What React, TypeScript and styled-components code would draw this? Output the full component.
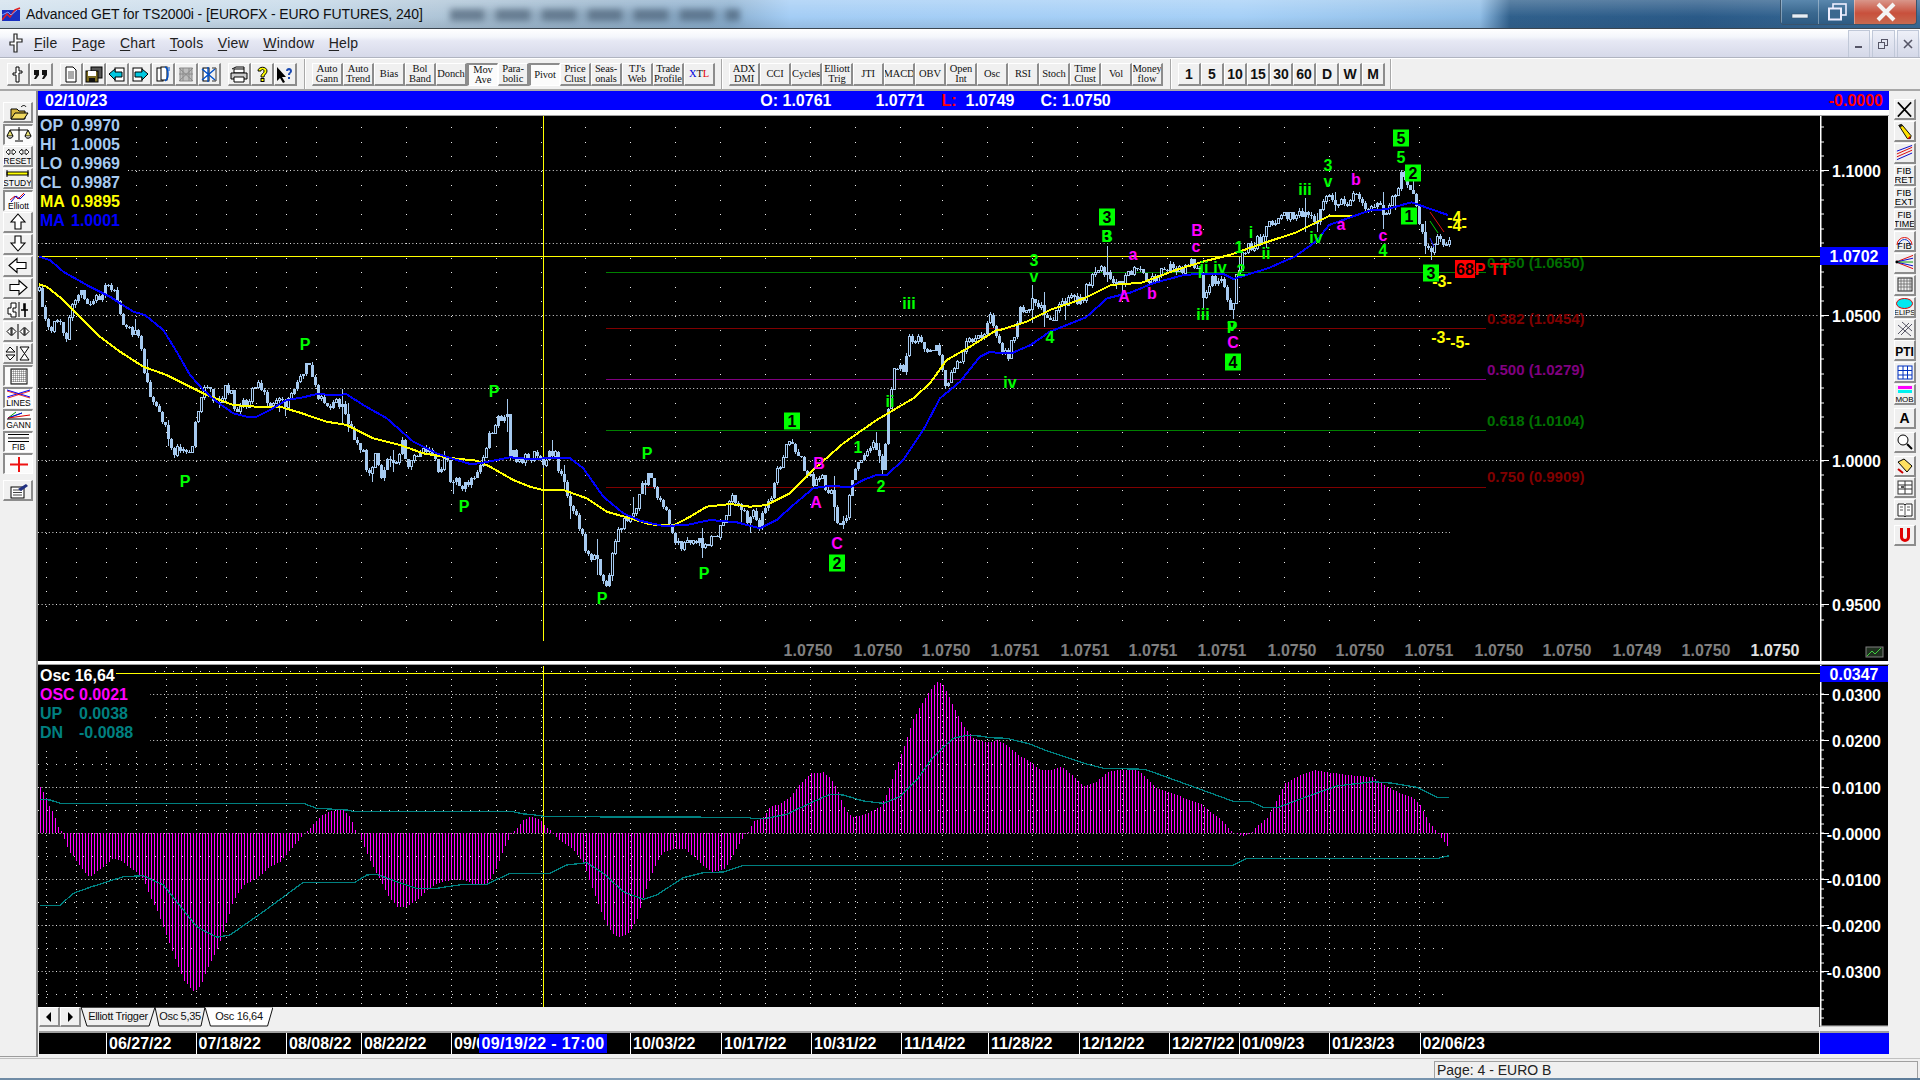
import React from "react";
import styled, { createGlobalStyle } from "styled-components";

const Global = createGlobalStyle`
  html, body { margin: 0; padding: 0; width: 1920px; height: 1080px; overflow: hidden; background: #f0f0f0; }
  #root { width: 1920px; height: 1080px; }
  * { box-sizing: border-box; }
`;

const SANS = `"Liberation Sans", Arial, sans-serif`;
const SKY = "#a6caf0";

/* ---------- data ---------- */
type P = [number, number];
const z9 = (a: number[][]): P[] => a.map(([v, w]) => [30 + v / 3, 240 + w / 3]);
const z10 = (a: number[][]): P[] => a.map(([v, w]) => [530 + v / 3, 280 + w / 3]);
const z7 = (a: number[][]): P[] => a.map(([v, w]) => [1000 + v / 2.613, 110 + w / 3]);
const z8o = (a: number[][]): P[] => a.map(([v, w]) => [30 + v / 3, 640 + w / 3]);
const z11 = (a: number[][]): P[] => a.map(([v, w]) => [530 + v / 3, 660 + w / 3]);
const z12 = (a: number[][]): P[] => a.map(([v, w]) => [1030 + v / 3, 660 + w / 3]);

const pricePath: P[] = [
  ...z9([[27,150],[33,170],[40,250],[60,265],[85,240],[100,280],[110,290],[125,200],[135,190],[155,160],[175,190],[190,165],[205,180],[225,150],[250,140],[265,200],[280,265],[300,270],[320,265],[335,350],[343,410],[352,440],[362,475],[378,485],[390,530],[405,545],[415,590],[425,640],[440,630],[470,640],[485,620],[497,550],[505,525],[515,450],[530,435],[550,470],[570,490],[585,450],[600,450],[615,520],[640,480],[650,520],[665,460],[685,440],[705,465],[720,490],[750,460],[765,505],[790,460],[810,415],[830,350],[845,400],[865,470],[885,510],[905,490],[930,495],[950,530],[970,580],[990,620],[1005,665],[1020,710],[1035,650],[1055,705],[1075,655],[1095,670],[1115,610],[1130,680],[1150,640],[1180,640],[1200,625],[1225,690],[1250,640],[1260,735],[1280,715],[1300,745],[1330,720],[1350,670],[1375,590],[1395,545],[1410,530],[1430,520],[1440,635],[1460,660]]),
  ...z10([[20,530],[40,555],[60,505],[75,530],[90,590],[115,650],[135,700],[155,770],[175,825],[200,850],[225,915],[240,860],[260,760],[285,720],[320,690],[335,620],[355,580],[380,640],[400,680],[420,730],[440,790],[470,795],[500,790],[525,790],[550,770],[585,725],[605,650],[625,675],[650,715],[670,680],[690,740],[705,670],[725,640],[745,560],[765,510],[790,490],[805,520],[825,565],[850,620],[875,590],[885,640],[905,625],[925,745],[950,720],[960,620],[980,560],[1010,520],[1030,480],[1045,510],[1060,580],[1070,400],[1085,300],[1100,255],[1120,285],[1135,165],[1145,195],[1165,160],[1190,230],[1220,205],[1245,310],[1270,285],[1300,210],[1320,170],[1350,180],[1378,115],[1410,210]]),
  ...z7([[20,740],[35,680],[50,590],[70,610],[90,570],[110,605],[130,625],[150,600],[180,560],[210,575],[240,500],[260,480],[280,490],[300,510],[320,515],[350,480],[375,500],[400,510],[440,470],[470,485],[505,460],[520,470],[530,570],[555,510],[585,520],[605,610],[615,515],[630,440],[650,410],[680,390],[710,330],[750,320],[775,310],[800,320],[825,340],[840,300],[860,250],[880,285],[910,280],[930,250],[945,295],[965,290],[985,270],[1005,320],[1030,260],[1050,180],[1060,240],[1080,240],[1090,330],[1100,370],[1115,400],[1130,430],[1145,380],[1160,395],[1175,395]]),
];

const blueMA: P[] = [
  ...z9([[27,50],[60,60],[100,95],[170,135],[240,170],[270,190],[310,215],[345,225],[400,270],[440,335],[480,405],[520,450],[560,485],[610,520],[650,530],[680,530],[720,510],[770,480],[820,472],[860,462],[910,465],[950,463],[1000,495],[1070,535],[1150,605],[1220,640],[1280,660],[1320,672],[1350,670],[1400,660],[1440,652]]),
  ...z10([[0,537],[50,535],[120,535],[160,565],[220,650],[280,700],[330,722],[400,738],[470,735],[540,720],[620,727],[690,745],[740,720],[790,675],[850,625],[900,617],[960,622],[1000,600],[1040,585],[1070,585],[1120,540],[1180,450],[1230,355],[1290,305],[1350,230],[1380,215]]),
  ...z7([[0,730],[30,730],[80,705],[130,665],[225,622],[280,565],[340,548],[400,520],[480,495],[520,492],[585,493],[610,507],[700,475],[770,440],[825,395],[860,345],[920,320],[970,300],[1010,298],[1075,277],[1170,315]]),
];

const yellowMA: P[] = [
  ...z9([[27,133],[50,140],[100,180],[160,240],[210,290],[270,335],[340,380],[410,405],[470,435],[530,465],[610,495],[680,500],[750,500],[810,518],[890,545],[950,555],[1030,595],[1110,615],[1180,640],[1270,655],[1340,662],[1380,680],[1450,720]]),
  ...z10([[0,620],[40,630],[100,630],[170,655],[230,695],[300,715],[360,733],[430,737],[480,710],[530,680],[600,672],[660,680],[710,675],[780,640],[860,560],[940,490],[1040,420],[1150,355],[1200,310],[1250,240],[1320,200],[1400,150]]),
  ...z7([[0,660],[70,635],[130,600],[220,565],[290,525],[370,518],[460,480],[530,455],[600,435],[700,395],[775,367],[860,318],[920,318]]),
];

const histEnv: P[] = [
  ...z8o([[29,440],[38,455],[47,470],[56,495],[65,510],[74,530],[83,560],[92,572],[100,580],[101,595],[110,620],[120,640],[130,650],[140,665],[150,680],[165,700],[180,712],[200,695],[225,675],[250,655],[270,660],[300,685],[320,697],[340,720],[360,770],[380,810],[400,865],[420,915],[440,970],[460,1020],[490,1055],[510,1040],[530,990],[560,930],[585,860],[610,780],[640,735],[680,715],[720,680],[750,665],[780,630],[810,595],[820,580],[830,575],[850,550],[875,525],[905,512],[940,510],[960,530],[975,570],[985,580],[1000,615],[1025,675],[1050,720],[1075,770],[1100,800],[1125,803],[1160,780],[1190,750],[1220,730],[1260,720],[1300,720],[1330,733],[1370,730],[1395,695],[1420,630],[1440,585],[1455,570],[1480,540]]),
  ...z11([[0,470],[30,478],[40,495],[50,502],[60,510],[68,520],[75,530],[100,548],[130,570],[160,610],[175,655],[200,720],[220,775],[245,820],[265,832],[295,820],[320,780],[340,710],[360,655],[380,605],[400,575],[430,568],[465,568],[490,590],[520,620],[545,635],[580,630],[600,600],[625,555],[645,522],[655,515],[670,485],[700,470],[720,440],[750,432],[780,410],[805,378],[840,340],[880,337],[900,355],[920,385],[945,450],[965,470],[990,468],[1020,455],[1050,440],[1075,390],[1095,330],[1120,265],[1150,175],[1190,105],[1220,65],[1240,75],[1270,140],[1300,200],[1330,235],[1370,248],[1400,240],[1430,255],[1465,285]]),
  ...z12([[7,310],[25,328],[50,332],[95,320],[125,345],[160,378],[195,368],[235,335],[270,330],[320,330],[345,350],[380,385],[420,398],[465,415],[510,430],[540,455],[570,475],[600,510],[615,520],[640,528],[660,522],[680,498],[710,475],[735,430],[765,370],[810,345],[850,330],[900,338],[960,346],[1030,352],[1060,375],[1100,395],[1150,415],[1170,435],[1195,485],[1215,510],[1230,530],[1250,555],[1258,580]]),
];

const upperTeal: P[] = [
  ...z8o([[29,478],[60,480],[90,490],[820,490],[860,505],[950,510],[975,515],[1450,515],[1480,522]]),
  ...z11([[0,463],[50,470],[655,472],[665,475],[710,475],[770,463],[850,425],[900,403],[940,405],[1000,423],[1060,430],[1110,410],[1160,360],[1210,290],[1270,235],[1310,226],[1350,228],[1380,233],[1430,235]]),
  ...z12([[0,252],[50,272],[170,312],[220,325],[345,328],[610,424],[660,424],[700,442],[745,442],[830,410],[920,378],[1030,365],[1090,370],[1160,382],[1220,412],[1258,412]]),
];
const lowerTeal: P[] = [
  ...z8o([[29,796],[90,796],[130,760],[180,742],[280,710],[340,707],[400,735],[500,860],[560,892],[600,885],[700,815],[820,727],[975,727],[1010,705],[1040,703],[1100,725],[1160,745],[1220,745],[1300,733],[1370,733],[1440,700]]),
  ...z11([[0,640],[60,640],[110,615],[170,608],[220,640],[280,695],[340,718],[380,705],[460,653],[520,638],[580,636],[640,616]]),
  ...z12([[0,616],[610,616],[650,595],[1225,595],[1258,587]]),
];

const interp = (path: P[], x: number) => {
  for (let i = 1; i < path.length; i++) {
    if (x <= path[i][0]) {
      const [x0, y0] = path[i - 1];
      const [x1, y1] = path[i];
      const t = x1 === x0 ? 0 : (x - x0) / (x1 - x0);
      return y0 + (y1 - y0) * Math.max(0, Math.min(1, t));
    }
  }
  return path[path.length - 1][1];
};
const pts = (p: P[]) => p.map(([x, y]) => `${x.toFixed(1)},${y.toFixed(1)}`).join(" ");

let seed = 20230210;
const rnd = () => {
  seed = (seed + 0x6d2b79f5) | 0;
  let t = Math.imul(seed ^ (seed >>> 15), 1 | seed);
  t = (t + Math.imul(t ^ (t >>> 7), 61 | t)) ^ t;
  return ((t ^ (t >>> 14)) >>> 0) / 4294967296;
};

type Bar = { x: number; o: number; c: number; h: number; l: number; solid: boolean };
const bars: Bar[] = [];
let prev = interp(pricePath, 39);
for (let x = 39; x <= 1451; x += 3) {
  const c = interp(pricePath, x) + (rnd() - 0.5) * 11;
  const spike = rnd() > 0.85 ? rnd() * 15 : 0;
  const h = Math.min(prev, c) - rnd() * 3 - (rnd() > 0.5 ? spike : 0);
  const l = Math.max(prev, c) + rnd() * 3 + (rnd() > 0.5 ? spike : 0);
  bars.push({ x, o: prev, c, h, l, solid: c > prev || rnd() > 0.7 });
  prev = c;
}

const columns = [
  45.7, 75.7, 105.7, 135.7, 165.7, 195.7, 225.7, 255.7, 285.7, 315.7, 360.7, 405.7, 450.7, 495.7, 540.7, 585, 630, 675, 720, 765, 810, 855, 900, 942, 987,
  1032, 1077, 1122, 1167, 1203, 1239, 1284, 1329, 1374, 1419,
];
const mainDense = [170, 243, 315, 388, 460, 532, 604];
const mainRows = Array.from({ length: 35 }, (_, i) => 127 + i * 14.5);
const oscDense = [694, 740, 787, 833, 879, 925, 971];
const oscSparse = [671, 717, 764, 810, 856, 902, 948, 994];

type L = [string, number, number];
const GREEN = "#00ff00";
const MAGENTA = "#ff00ff";
const YELLOW = "#ffff00";
const greenLabels: L[] = [
  ["P", 305, 344], ["P", 185, 481], ["P", 464, 506], ["P", 494, 391], ["P", 647, 453], ["P", 602, 598], ["P", 704, 573],
  ["1", 858, 447], ["2", 881, 486], ["ii", 890, 401], ["iii", 909, 303], ["iv", 1010, 382], ["4", 1050, 337], ["3", 1034, 260], ["v", 1034, 276],
  ["3", 1107, 236], ["B", 1107, 236], ["ii", 1204, 267], ["i", 1200, 272], ["iv", 1220, 267], ["iii", 1203, 314], ["P", 1232, 327], ["v", 1232, 325],
  ["1", 1239, 247], ["2", 1241, 270], ["i", 1251, 232], ["ii", 1266, 253], ["iii", 1305, 189], ["iv", 1316, 237], ["3", 1328, 165], ["v", 1328, 181],
  ["4", 1383, 250], ["5", 1401, 157],
];
const magentaLabels: L[] = [
  ["B", 819, 463], ["A", 816, 502], ["C", 837, 543], ["a", 1133, 254], ["A", 1124, 296], ["b", 1152, 293], ["B", 1197, 230], ["c", 1196, 246],
  ["C", 1233, 342], ["a", 1341, 224], ["b", 1356, 179], ["c", 1383, 235],
];
const boxes: L[] = [["1", 792, 421], ["2", 837, 563], ["3", 1107, 217], ["4", 1233, 362], ["5", 1401, 138], ["2", 1413, 173], ["1", 1409, 216], ["3", 1431, 273]];
const yellowLabels: L[] = [["-4-", 1457, 217], ["-4-", 1457, 225], ["-3-", 1442, 281], ["-3-", 1441, 337], ["-5-", 1460, 342]];
const fibs = [
  { y: 272, ty: 262, t: "0.250 (1.0650)", c: "#006e00" },
  { y: 328, ty: 318, t: "0.382 (1.0454)", c: "#800000" },
  { y: 379, ty: 369, t: "0.500 (1.0279)", c: "#800080" },
  { y: 430, ty: 420, t: "0.618 (1.0104)", c: "#007000" },
  { y: 487, ty: 476, t: "0.750 (0.9909)", c: "#800000" },
];
const priceRow: [string, number, string][] = [
  ["1.0750", 808, "#808080"], ["1.0750", 878, "#808080"], ["1.0750", 946, "#808080"], ["1.0751", 1015, "#808080"], ["1.0751", 1085, "#808080"],
  ["1.0751", 1153, "#808080"], ["1.0751", 1222, "#808080"], ["1.0750", 1292, "#808080"], ["1.0750", 1360, "#808080"], ["1.0751", 1429, "#808080"],
  ["1.0750", 1499, "#808080"], ["1.0750", 1567, "#808080"], ["1.0749", 1637, "#808080"], ["1.0750", 1706, "#808080"], ["1.0750", 1775, "#e0e0e0"],
];

/* ---------- chrome ---------- */
const Page = styled.div`
  width: 1920px; height: 1080px; display: flex; flex-direction: column; background: #f0f0f0; font-family: ${SANS};
`;
const TitleBar = styled.div`
  height: 29px; flex: none; display: flex; align-items: center; position: relative; padding-left: 2px; border-bottom: 1px solid #3c4650;
  background:
    linear-gradient(180deg, rgba(255,255,255,.22) 0%, rgba(255,255,255,0) 60%, rgba(40,60,80,.12) 100%),
    linear-gradient(90deg, #d3e2ee 0, #c4d8e8 300px, #b0c6d8 430px, #98b4cc 600px, #8cb0d0 730px, #a4cdf5 790px, #a6d0f7 1240px, #8fbde6 1480px, #30608c 1510px, #2a5a88 1700px, #3a6c98 1920px);
`;
const TitleBlur = styled.div`
  position: absolute; left: 450px; top: 9px; width: 290px; height: 12px; filter: blur(3px);
  background: repeating-linear-gradient(90deg, rgba(60,80,100,.6) 0 34px, rgba(60,80,100,.15) 34px 46px);
`;
const TitleText = styled.span`
  font-size: 14px; letter-spacing: -0.12px; color: #101010; margin-left: 4px; white-space: nowrap; position: relative;
`;
const WinButtons = styled.div`
  position: absolute; right: 3px; top: 0; height: 25px; display: flex; border: 1px solid #39536b; border-top: 0; border-radius: 0 0 4px 4px; overflow: hidden;
`;
const WinButton = styled.div<{ $w: number; $red?: boolean }>`
  width: ${(p) => p.$w}px; display: flex; align-items: center; justify-content: center; border-left: 1px solid rgba(255,255,255,.35);
  background: ${(p) => (p.$red ? "linear-gradient(180deg,#d9968a,#c8503c 55%,#c86a50)" : "linear-gradient(180deg,#5a87ad,#3a688f 55%,#2e5b83)")};
`;
const MenuBar = styled.div`
  height: 29px; flex: none; display: flex; align-items: center; position: relative; padding-left: 9px; border-bottom: 1px solid #b0b4c0;
  background: linear-gradient(180deg, #ffffff 0, #f4f6fb 8px, #e6e8f4 12px, #d6d9e9 100%);
`;
const MenuItems = styled.nav`
  display: flex; gap: 14.5px; margin-left: 11px; font-size: 14px; letter-spacing: .2px; color: #222;
  u { text-underline-offset: 2px; }
`;
const MdiButtons = styled.div`
  position: absolute; right: 1px; top: 1px; bottom: 0; display: flex; gap: 2px;
`;
const MdiButton = styled.div`
  width: 22.5px; display: flex; align-items: center; justify-content: center; background: linear-gradient(180deg,#eef0f8,#d4d8e8); border: 1px solid #c0c8d8; border-bottom: 0;
`;
const ToolBar = styled.div`
  height: 33px; flex: none; display: flex; padding-left: 7px; background: #f0f0f0; border-top: 1px solid #fff; border-bottom: 2px solid #a8a8a8;
`;
const ToolGroup = styled.div<{ $ml?: number }>`
  display: flex; margin-left: ${(p) => p.$ml ?? 0}px; padding-top: 4px;
`;
const ToolSep = styled.div<{ $l: number; $r: number }>`
  width: 2px; margin: 0 ${(p) => p.$r}px 0 ${(p) => p.$l}px; background: linear-gradient(90deg, #a8a8a8 50%, #fff 50%);
`;
const raised = `
  background: #f0f0f0; border-top: 1px solid #fff; border-left: 1px solid #fff; border-right: 2px solid #8c8c8c; border-bottom: 2px solid #8c8c8c;
`;
const sunken = `
  background: #fbfbfb; border-top: 2px solid #8c8c8c; border-left: 2px solid #8c8c8c; border-right: 1px solid #fff; border-bottom: 1px solid #fff;
`;
const TopButton = styled.div<{ $w: number; $on?: boolean }>`
  width: ${(p) => p.$w}px; height: 23px; display: flex; align-items: center; justify-content: center; text-align: center; overflow: hidden;
  ${(p) => (p.$on ? sunken : raised)}
`;
const ToolLabel = styled.span<{ $color?: string }>`
  font: 10.5px/10px "Liberation Serif", serif; letter-spacing: -0.1px; color: ${(p) => p.$color ?? "#111"}; white-space: pre-line;
`;
const NumLabel = styled.span`
  font: bold 14px ${SANS}; color: #111;
`;
const Body = styled.div`
  flex: 1; display: flex; min-height: 0;
`;
const SideTools = styled.div<{ $w: number; $pt: number; $pl: number }>`
  width: ${(p) => p.$w}px; flex: none; display: flex; flex-direction: column; padding: ${(p) => p.$pt}px 0 0 ${(p) => p.$pl}px;
`;
const LeftTools = styled(SideTools)`
  border-right: 2px solid #8a8a8a; border-bottom: 1px solid #9c9c9c; height: 966px;
`;
const SideButton = styled.div<{ $w: number; $on?: boolean; $mt: number }>`
  width: ${(p) => p.$w}px; height: 21px; margin-top: ${(p) => p.$mt}px; flex: none; display: flex; align-items: center; justify-content: center; overflow: hidden;
  ${(p) => (p.$on ? sunken : raised)}
`;
const Center = styled.div`
  width: 1851px; flex: none; display: flex; flex-direction: column;
`;
const Header = styled.div`
  height: 19px; flex: none; background: #0000ff; display: flex; align-items: center; padding-left: 7px; color: #fff; font: bold 16px ${SANS}; position: relative;
  margin-bottom: 5px; box-shadow: 0 5px 0 #fff;
`;
const HeaderStat = styled.span<{ $ml: number; $c?: string }>`
  margin-left: ${(p) => p.$ml}px; color: ${(p) => p.$c ?? "#fff"}; white-space: pre;
`;
const HeaderEnd = styled.span`
  margin-left: auto; margin-right: 6px; color: #ff0000;
`;
const HeadRule = styled.div`
  height: 1px; flex: none; background: #a0a0a0;
`;
const ChartRow = styled.div<{ $h: number }>`
  height: ${(p) => p.$h}px; flex: none; display: flex;
`;
const ChartColumn = styled.div`
  width: 1782px; flex: none; display: flex; flex-direction: column;
`;
const Canvas = styled.svg`
  display: block; flex: none; background: #000;
`;
const Splitter = styled.div`
  height: 4px; flex: none; background: #fff; border-bottom: 1px solid #a0a0a0;
`;
const Tabs = styled.div`
  height: 20px; flex: none; display: flex; align-items: stretch; background: #f0f0f0; padding-left: 1px; border-right: 1px solid #555;
`;
const NavButton = styled.div`
  width: 21px; height: 20px; display: flex; align-items: center; justify-content: center; ${raised}
`;
const Tab = styled.div<{ $w: number }>`
  width: ${(p) => p.$w}px; height: 20px; position: relative; display: flex; align-items: center; justify-content: center;
  font: 11px ${SANS}; letter-spacing: -0.3px; color: #111; padding-bottom: 3px;
  svg { position: absolute; inset: 0; width: 100%; height: 100%; }
  span { position: relative; }
`;
const DateRow = styled.div`
  display: flex; margin-top: 4px; height: 25px; flex: none;
`;
const DateBar = styled.div`
  width: 1781px; height: 23px; position: relative; display: flex; background: #000; border-top: 2px solid #a0a0a0; margin-left: 1px;
`;
const DateCell = styled.div<{ $w: number }>`
  width: ${(p) => p.$w}px; flex: none; overflow: hidden; white-space: nowrap; padding-left: 2px; border-left: 1px solid #fff;
  color: #fff; font: bold 16px/21px ${SANS};
`;
const DateGap = styled.div<{ $w: number }>`
  width: ${(p) => p.$w}px; flex: none;
`;
const DateMark = styled.div`
  position: absolute; left: 440px; top: 1px; width: 128px; height: 19px; background: #0000ff; color: #fff; font: bold 16px/19px ${SANS}; text-align: center; letter-spacing: .35px;
`;
const BlueBlock = styled.div`
  width: 69px; height: 23px; margin-left: 1px; background: #0000ff; border-top: 2px solid #a0a0a0;
`;
const StatusBar = styled.div`
  height: 20px; flex: none; display: flex; justify-content: flex-end; border-top: 1px solid #c0c0c0;
`;
const PageBox = styled.div`
  width: 484px; margin-right: 2px; margin-top: 2px; border-top: 1px solid #a0a0a0; border-left: 1px solid #a0a0a0; border-right: 1px solid #a0a0a0; padding-left: 2px;
  font: 14px/17px ${SANS}; color: #222;
`;
const BottomEdge = styled.div`
  height: 2px; flex: none; background: linear-gradient(90deg, #6f8ba5, #8faac2 50%, #5d7c99);
`;
const Legend = styled.text<{ $c: string }>`
  fill: ${(p) => p.$c}; font: bold 16px ${SANS}; dominant-baseline: central;
`;
const Mark = styled.text<{ $c: string; $s?: number }>`
  fill: ${(p) => p.$c}; font: bold ${(p) => p.$s ?? 16}px ${SANS}; text-anchor: middle; dominant-baseline: central;
`;
const FibText = styled.text<{ $c: string }>`
  fill: ${(p) => p.$c}; font: bold 15px ${SANS}; dominant-baseline: central;
`;
const AxisText = styled.text`
  fill: #fff; font: bold 16px ${SANS}; text-anchor: end; dominant-baseline: central;
`;
const AxisTag = styled.text`
  fill: #fff; font: bold 16px ${SANS}; text-anchor: middle; dominant-baseline: central;
`;
const IconText = styled.text<{ $s: number; $c?: string }>`
  font: ${(p) => p.$s}px ${SANS}; fill: ${(p) => p.$c ?? "#000"}; text-anchor: middle;
`;

/* ---------- icons ---------- */
const Ico: React.FC<{ w?: number; h?: number; children: React.ReactNode }> = ({ w = 20, h = 17, children }) => (
  <svg width={w} height={h} viewBox={`0 0 ${w} ${h}`}>{children}</svg>
);
const Arrow: React.FC<{ d: string }> = ({ d }) => (
  <Ico w={24} h={17}><path d={d} fill="#fff" stroke="#000" strokeWidth="1.1" /></Ico>
);
const PinPath = "M8 1h3v4h3v2h-3v9H8V9H5V7h3z";

const topIcons: React.ReactNode[] = [
  <Ico key="a"><path d={PinPath} fill="#fff" stroke="#000" /></Ico>,
  <Ico key="b"><path d="M3 4h5v5l-3 4H3l2-4H3zM11 4h5v5l-3 4h-2l2-4h-2z" fill="#111" /></Ico>,
];
const fileIcons: React.ReactNode[] = [
  <Ico key="1"><path d="M5 1h7l3 3v12H5z" fill="#fff" stroke="#000" /><path d="M7 6h6M7 8h6M7 10h6M7 12h6" stroke="#555" /></Ico>,
  <Ico key="2"><rect x="7" y="1" width="11" height="11" fill="#555" stroke="#000" /><rect x="2" y="5" width="12" height="11" fill="#7a6a20" stroke="#000" /><rect x="4" y="5" width="8" height="5" fill="#fff" /><rect x="5" y="12" width="6" height="4" fill="#111" /></Ico>,
  <Ico key="3"><rect x="8" y="2" width="9" height="13" fill="#fff" stroke="#000" /><path d="M2 8l6-5v3h7v5H8v3z" fill="#00c8e0" stroke="#000" /></Ico>,
  <Ico key="4"><rect x="3" y="2" width="9" height="13" fill="#fff" stroke="#000" /><path d="M18 8l-6-5v3H5v5h7v3z" fill="#00c8e0" stroke="#000" /></Ico>,
  <Ico key="5"><rect x="4" y="2" width="6" height="13" fill="#fff" stroke="#000" /><rect x="8" y="1" width="6" height="13" fill="#fff" stroke="#000" /><path d="M12 1c3 1 3 4 3 7s0 5-3 7" fill="none" stroke="#0050c8" strokeWidth="1.5" /><path d="M16 1v4" stroke="#0050c8" /></Ico>,
  <Ico key="6"><rect x="4" y="2" width="12" height="13" fill="#bdbdbd" stroke="#8a8a8a" /><path d="M3 2l14 13M17 2L3 15M7 2v13M13 2v13M3 8h14" stroke="#8a8a8a" /></Ico>,
  <Ico key="7"><rect x="4" y="2" width="6" height="13" fill="#fff" stroke="#000" /><path d="M3 3l13 11M16 3L3 14M9 1v15" stroke="#0050c8" strokeWidth="1.4" /><path d="M13 2h4v13h-4" fill="none" stroke="#333" /></Ico>,
];
const helpIcons: React.ReactNode[] = [
  <Ico key="1"><path d="M5 3h10v4H5z" fill="#fff" stroke="#000" /><path d="M2 7h16v6H2z" fill="#ccc" stroke="#000" /><path d="M5 11h10v5H5z" fill="#fff" stroke="#000" /><path d="M3 3l4-2h8v2" fill="none" stroke="#000" /></Ico>,
  <Ico key="2"><path d="M6 5c0-5 9-5 9 0 0 3-3 3-3 6H9c0-4 3-3 3-6 0-2-3-2-3 0z" fill="#ff0" stroke="#000" /><rect x="9" y="12.5" width="3" height="3" fill="#ff0" stroke="#000" /></Ico>,
  <Ico key="3"><path d="M2 1v14l3-3 3 5 2-1-3-5h4z" fill="#000" /><path d="M11 5c0-4 6-4 6 0 0 2-2 2-2 4h-2c0-3 2-2 2-4 0-1-2-1-2 0zM13 11h2v2h-2z" fill="#1848b0" /></Ico>,
];

const ind1: { t: React.ReactNode; on?: boolean }[] = [
  { t: "Auto\nGann" }, { t: "Auto\nTrend" }, { t: "Bias" }, { t: "Bol\nBand" }, { t: "Donch" }, { t: "Mov\nAve", on: true }, { t: "Para-\nbolic" }, { t: "Pivot", on: true },
  { t: "Price\nClust" }, { t: "Seas-\nonals" }, { t: "TJ's\nWeb" }, { t: "Trade\nProfile" },
];
const ind2 = ["ADX\nDMI", "CCI", "Cycles", "Elliott\nTrig", "JTI", "MACD", "OBV", "Open\nInt", "Osc", "RSI", "Stoch", "Time\nClust", "Vol", "Money\nflow"];
const periods = ["1", "5", "10", "15", "30", "60", "D", "W", "M"];

const leftIcons: { n: React.ReactNode; on?: boolean }[] = [
  { n: <Ico w={24}><path d="M5 5h6l2 2h6v8H5z" fill="#d8b840" stroke="#000" /><path d="M5 15l4-6h13l-4 6z" fill="#f0d860" stroke="#000" /><path d="M15 3c2-2 4-2 5 0" fill="none" stroke="#000" /></Ico> },
  { n: <Ico w={26}><path d="M13 1v13M4 4h18M9 15h8" stroke="#000" /><path d="M4 4L1 10h6zM22 4l-3 6h6z" fill="#e8e070" stroke="#000" /><path d="M1 10c1 3 5 3 6 0M19 10c1 3 5 3 6 0" fill="#bbb" stroke="#000" /></Ico>, on: true },
  { n: <Ico w={27} h={18}><path d="M2 5l3-3v2h4V2l3 3-3 3V6H5v2zM15 5l3-3v2h4V2l3 3-3 3V6h-4v2z" fill="#fff" stroke="#000" strokeWidth=".8" /><IconText x={13.5} y={16.5} $s={8.5}>RESET</IconText></Ico> },
  { n: <Ico w={27} h={18}><rect x="3" y="3" width="21" height="3" fill="#ff0" stroke="#000" /><path d="M3 1v7M24 1v7" stroke="#000" /><IconText x={13.5} y={16.5} $s={8.5}>STUDY</IconText></Ico> },
  { n: <Ico w={27} h={18}><path d="M5 8l5-4 3 3 6-6" fill="none" stroke="#d00" /><path d="M6 10l5-6 4 3 5-5" fill="none" stroke="#00c" /><IconText x={13.5} y={16.5} $s={8.5}>Elliott</IconText></Ico>, on: true },
  { n: <Arrow d="M12 1l7 8h-4v7H9V9H5z" /> },
  { n: <Arrow d="M12 16l7-8h-4V1H9v7H5z" /> },
  { n: <Arrow d="M3 8.5l8-7v4h9v6h-9v4z" /> },
  { n: <Arrow d="M21 8.5l-8-7v4H4v6h9v4z" /> },
  { n: <Ico w={26}><path d="M3 7h3V2h5v5H8v4h3v5H6v-3H3z" fill="#fff" stroke="#000" /><path d="M14 1v15" stroke="#000" /><path d="M16 9h3V3h1v6h3M20 9v7" fill="none" stroke="#000" strokeWidth="1.6" /></Ico> },
  { n: <Ico w={26}><path d="M13 1v15" stroke="#000" /><path d="M2 8.5l4-4v8zM11 8.5l-4-4v8zM15 8.5l4-4v8zM24 8.5l-4-4v8z" fill="#fff" stroke="#000" /></Ico> },
  { n: <Ico w={26}><path d="M12 1v15" stroke="#000" /><path d="M5 2l5 5H1zM5 15l5-5H1z" fill="#fff" stroke="#000" /><path d="M15 2h9l-9 13h9z" fill="#fff" stroke="#000" /></Ico> },
  { n: <Ico w={24}><rect x="4" y="1" width="16" height="15" fill="#fff" stroke="#000" /><path d="M6 1v15M8 1v15M10 1v15M12 1v15M14 1v15M16 1v15M18 1v15M4 3h16M4 5h16M4 7h16M4 9h16M4 11h16M4 13h16" stroke="#333" strokeWidth=".7" strokeDasharray="1 1" /></Ico>, on: true },
  { n: <Ico w={27} h={18}><path d="M2 1l23 7M2 8l23-7" stroke="#00f" /><path d="M2 2l23 7M3 9L25 2" stroke="#d00" strokeWidth=".8" /><IconText x={13.5} y={16.5} $s={8.5}>LINES</IconText></Ico>, on: true },
  { n: <Ico w={27} h={18}><path d="M3 7l8-6M3 7l14-5" stroke="#090" /><path d="M3 7l14-5" stroke="#00f" /><path d="M3 7l22-3" stroke="#d00" /><path d="M2 8h24" stroke="#000" /><IconText x={13.5} y={16.5} $s={8.5}>GANN</IconText></Ico>, on: true },
  { n: <Ico w={27} h={18}><path d="M3 1.5h21M3 5h21M3 8.5h21" stroke="#000" /><IconText x={13.5} y={16.5} $s={8.5}>FIB</IconText></Ico>, on: true },
  { n: <Ico w={24}><path d="M12 1v15M3 8.5h18" stroke="#ee1111" strokeWidth="2" /></Ico>, on: true },
];

const rightIcons: React.ReactNode[] = [
  <Ico key="a" w={20}><path d="M3 1l14 15M17 1L3 16" stroke="#000" strokeWidth="1.7" /></Ico>,
  <Ico key="b" w={20}><path d="M4 2l3-1 10 12-1 3-3 0z" fill="#ffe000" stroke="#000" /><path d="M16 16l-3 0 3-3z" fill="#c00" /><path d="M4 2l3-1 1 2-3 1z" fill="#222" /></Ico>,
  <Ico key="c" w={20}><path d="M2 9l16-7M2 12l16-7" stroke="#d00" /><path d="M2 15l16-7M2 6l16-6" stroke="#00c" /></Ico>,
  <Ico key="d" w={19} h={18}><IconText x={9} y={8} $s={9.5}>FIB</IconText><IconText x={9} y={16.5} $s={9.5}>RET</IconText></Ico>,
  <Ico key="e" w={19} h={18}><IconText x={9} y={8} $s={9.5}>FIB</IconText><IconText x={9} y={16.5} $s={9.5}>EXT</IconText></Ico>,
  <Ico key="f" w={19} h={18}><IconText x={9.5} y={8} $s={9}>FIB</IconText><IconText x={9.5} y={16.5} $s={9}>TIME</IconText></Ico>,
  <Ico key="g" w={19} h={18}><path d="M2 13a7.5 7.5 0 0 1 15 0" fill="none" stroke="#e01010" /><path d="M4 13a5.5 5.5 0 0 1 11 0" fill="none" stroke="#1040d0" /><IconText x={9.5} y={16.5} $s={9.5}>FIB</IconText></Ico>,
  <Ico key="h" w={20}><path d="M1 8l18-7M1 8l18 7" stroke="#d00" /><path d="M1 8l18-4M1 8l18 4" stroke="#00c" /><path d="M1 8h18" stroke="#090" /><circle cx="2" cy="8" r="1.5" /></Ico>,
  <Ico key="i" w={19}><rect x="3" y="2" width="14" height="13" fill="#eee" stroke="#222" /><path d="M6 2v13M9 2v13M12 2v13M15 2v13M3 5h14M3 8h14M3 11h14" stroke="#666" strokeWidth=".8" /></Ico>,
  <Ico key="j" w={19} h={18}><ellipse cx="9.5" cy="5.5" rx="8" ry="5" fill="#00e8f0" stroke="#d00" /><IconText x={9.5} y={16.5} $s={7.5}>ELIPS</IconText></Ico>,
  <Ico key="k" w={19}><path d="M3 14L14 3M6 15L17 4M3 5l13 11M7 2l10 9" stroke="#445" strokeWidth=".9" /></Ico>,
  <Ico key="l" w={19}><text x="9.5" y="13.5" textAnchor="middle" fontFamily={SANS} fontWeight="bold" fontSize="12">PTI</text></Ico>,
  <Ico key="m" w={19}><rect x="3" y="2" width="14" height="13" fill="#fff" stroke="#0030c0" /><path d="M8 2v13M12.5 2v13M3 6.5h14M3 11h14" stroke="#0030c0" /></Ico>,
  <Ico key="n" w={19} h={18}><rect x="3" y="1" width="14" height="3" fill="#ff00ff" /><rect x="3" y="5" width="14" height="3" fill="#00f0f0" /><IconText x={9.5} y={16.5} $s={8}>MOB</IconText></Ico>,
  <Ico key="o" w={19}><text x="9.5" y="14" textAnchor="middle" fontFamily={SANS} fontWeight="bold" fontSize="14">A</text></Ico>,
  <Ico key="p" w={19}><circle cx="8" cy="7" r="5" fill="#fff" stroke="#000" /><path d="M12 11l5 5" stroke="#000" strokeWidth="2" /></Ico>,
  <Ico key="q" w={19}><path d="M3 5l6-3 8 7-5 6z" fill="#ffe060" stroke="#000" /><path d="M3 12l5 4" stroke="#c00" strokeWidth="2" /></Ico>,
  <Ico key="r" w={19}><rect x="3" y="2" width="14" height="13" fill="#fff" stroke="#333" /><path d="M3 6h14M3 10h14M10 2v13" stroke="#333" /><rect x="6" y="7" width="3" height="2" fill="#555" /></Ico>,
  <Ico key="s" w={19}><path d="M3 3h6l1 1 1-1h6v12h-6l-1 1-1-1H3z" fill="#fff" stroke="#222" /><path d="M5 6h3M5 9h3M12 6h3M12 9h3M10 4v11" stroke="#555" /></Ico>,
];
const rightTops = [8, 1, 1, 1, 1, 0.5, 1, 1, 1, 1, 1, 0.5, 1, 1, 2.5, 3, 3, 0.5, 1];

const dateCells: [string, number][] = [
  ["06/27/22", 89.5], ["07/18/22", 90.5], ["08/08/22", 75], ["08/22/22", 90], ["09/05/22", 179], ["10/03/22", 91], ["10/17/22", 90], ["10/31/22", 90], ["11/14/22", 87],
  ["11/28/22", 91], ["12/12/22", 90], ["12/27/22", 70], ["01/09/23", 90], ["01/23/23", 90.5], ["02/06/23", 397],
];

/* ---------- charts ---------- */
const Fmt: React.FC<{ lines: [string, string, string][] }> = ({ lines }) => (
  <>
    {lines.map(([a, b, c], i) => (
      <g key={i}>
        <Legend $c={c} x={40} y={125 + i * 19}>{a}</Legend>
        <Legend $c={c} x={71} y={125 + i * 19}>{b}</Legend>
      </g>
    ))}
  </>
);

const PriceChart = () => (
  <Canvas width={1782} height={545} viewBox="38 116 1782 545">
    <g fill="#e8e8e8">
      {columns.map((x) => mainRows.map((y) => <rect key={`${x}-${y}`} x={Math.round(x)} y={Math.round(y)} width={1} height={1} />))}
    </g>
    {mainDense.map((y) => (
      <line key={y} x1={38} x2={y === 388 || y === 532 || y === 243 ? 1450 : 1820} y1={y + 0.5} y2={y + 0.5} stroke="#e0e0e0" strokeDasharray="1 2.6" />
    ))}
    {fibs.map((f) => (
      <line key={f.y} x1={606} x2={1486} y1={f.y + 0.5} y2={f.y + 0.5} stroke={f.c === "#006e00" || f.c === "#007000" ? "#008000" : f.c} />
    ))}
    <rect x={38} y={116} width={88} height={114} fill="#000" />
    <line x1={38} x2={1820} y1={256.5} y2={256.5} stroke={YELLOW} />
    <line x1={543.5} x2={543.5} y1={116} y2={641} stroke={YELLOW} />
    <g shapeRendering="crispEdges">
      {bars.map((b) => {
        const top = Math.min(b.o, b.c);
        const hh = Math.max(1, Math.abs(b.o - b.c));
        return (
          <g key={b.x}>
            <line x1={b.x + 0.5} x2={b.x + 0.5} y1={b.h} y2={b.l} stroke={SKY} />
            {b.solid ? (
              <rect x={b.x - 1} y={top} width={3} height={hh} fill={SKY} />
            ) : (
              <rect x={b.x - 0.5} y={top} width={2} height={hh} fill="#000" stroke={SKY} strokeWidth={1} />
            )}
          </g>
        );
      })}
      <line x1={1107.5} x2={1107.5} y1={246} y2={282} stroke={SKY} />
      <line x1={1305.5} x2={1305.5} y1={198} y2={232} stroke={SKY} />
      <line x1={1431.5} x2={1431.5} y1={250} y2={260} stroke={SKY} />
    </g>
    <polyline points={pts(yellowMA)} fill="none" stroke={YELLOW} strokeWidth="2" shapeRendering="crispEdges" />
    <polyline points={pts(blueMA)} fill="none" stroke="#0000ff" strokeWidth="2" shapeRendering="crispEdges" />
    <path d="M1430 212l14 20" stroke="#e01010" />
    <path d="M1430 221l8 12" stroke="#00d000" />
    <path d="M1430 238l4 9" stroke="#2020ff" />
    {fibs.map((f) => <FibText key={f.t} $c={f.c} x={1487} y={f.ty}>{f.t}</FibText>)}
    {priceRow.map(([t, x, c]) => <Mark key={x} $c={c} x={x} y={650}>{t}</Mark>)}
    {greenLabels.map(([t, x, y], i) => <Mark key={i} $c={GREEN} x={x} y={y}>{t}</Mark>)}
    {magentaLabels.map(([t, x, y], i) => <Mark key={i} $c={MAGENTA} x={x} y={y}>{t}</Mark>)}
    {boxes.map(([t, x, y], i) => (
      <g key={i}>
        <rect x={x - 8} y={y - 8.5} width={16} height={17} fill={GREEN} />
        <Mark $c="#000" x={x} y={y}>{t}</Mark>
      </g>
    ))}
    {yellowLabels.map(([t, x, y], i) => <Mark key={i} $c={YELLOW} x={x} y={y}>{t}</Mark>)}
    <rect x={1455} y={260} width={20} height={18} fill="#ff0000" />
    <Mark $c="#000" x={1465} y={269}>68</Mark>
    <Mark $c="#ff0000" x={1492} y={269}>P TT</Mark>
    <Fmt lines={[
      ["OP", "0.9970", SKY], ["HI", "1.0005", SKY], ["LO", "0.9969", SKY], ["CL", "0.9987", SKY], ["MA", "0.9895", YELLOW], ["MA", "1.0001", "#0000ff"],
    ]} />
  </Canvas>
);

const PriceAxis = () => (
  <Canvas width={69} height={545} viewBox="1820 116 69 545">
    <line x1={1820.5} x2={1820.5} y1={116} y2={661} stroke="#fff" strokeWidth="2" />
    {mainRows.map((y) => <line key={y} x1={1820} x2={1824} y1={Math.round(y)} y2={Math.round(y)} stroke="#fff" strokeWidth={1} />)}
    {[170, 315, 460, 604].map((y) => <line key={y} x1={1820} x2={1829} y1={y + 0.5} y2={y + 0.5} stroke="#fff" />)}
    <AxisText x={1881} y={171}>1.1000</AxisText>
    <AxisText x={1881} y={316}>1.0500</AxisText>
    <AxisText x={1881} y={461}>1.0000</AxisText>
    <AxisText x={1881} y={605}>0.9500</AxisText>
    <rect x={1820} y={247} width={68} height={18} fill="#0000ff" />
    <AxisTag x={1854} y={256}>1.0702</AxisTag>
    <rect x={1866} y={647} width={17} height={10} fill="#203020" stroke="#808080" />
    <path d="M1867 656l5-5 3 3 6-6" stroke="#40d040" fill="none" />
    <rect x={1888} y={116} width={1} height={545} fill="#f0f0f0" />
  </Canvas>
);

const histX: number[] = [];
for (let x = 40; x <= 1449; x += 3) histX.push(x);

const OscChart = () => (
  <Canvas width={1782} height={342} viewBox="38 665 1782 342">
    {columns.map((x) => <line key={x} x1={Math.round(x) + 0.5} x2={Math.round(x) + 0.5} y1={667} y2={1007} stroke="#e0e0e0" strokeDasharray="1 5" />)}
    {oscSparse.map((y) => <line key={y} x1={38} x2={1451} y1={y + 0.5} y2={y + 0.5} stroke="#e0e0e0" strokeDasharray="1 8" />)}
    {oscDense.map((y) => <line key={y} x1={38} x2={1820} y1={y + 0.5} y2={y + 0.5} stroke="#e0e0e0" strokeDasharray="1 2.6" />)}
    <rect x={38} y={665} width={112} height={82} fill="#000" />
    <line x1={116} x2={1820} y1={673.5} y2={673.5} stroke={YELLOW} />
    <line x1={543.5} x2={543.5} y1={666} y2={1007} stroke={YELLOW} />
    <g shapeRendering="crispEdges">
      {histX.map((x) => {
        const y = interp(histEnv, x);
        return <line key={x} x1={x + 0.5} x2={x + 0.5} y1={833} y2={y} stroke={MAGENTA} />;
      })}
    </g>
    <polyline points={pts(upperTeal)} fill="none" stroke="#008080" strokeWidth="1.3" shapeRendering="crispEdges" />
    <polyline points={pts(lowerTeal)} fill="none" stroke="#008080" strokeWidth="1.3" shapeRendering="crispEdges" />
    <Legend $c="#fff" x={40} y={675}>Osc 16,64</Legend>
    <Legend $c={MAGENTA} x={40} y={694}>OSC</Legend>
    <Legend $c={MAGENTA} x={79} y={694}>0.0021</Legend>
    <Legend $c="#008080" x={40} y={713}>UP</Legend>
    <Legend $c="#008080" x={79} y={713}>0.0038</Legend>
    <Legend $c="#008080" x={40} y={732}>DN</Legend>
    <Legend $c="#008080" x={79} y={732}>-0.0088</Legend>
  </Canvas>
);

const oscTicks = Array.from({ length: 36 }, (_, i) => 694 + i * 9.27);
const OscAxis = () => (
  <Canvas width={69} height={362} viewBox="1820 665 69 362">
    <line x1={1820.5} x2={1820.5} y1={665} y2={1027} stroke="#fff" strokeWidth="2" />
    {oscTicks.map((y) => <line key={y} x1={1820} x2={1824} y1={Math.round(y)} y2={Math.round(y)} stroke="#fff" />)}
    {oscDense.map((y) => <line key={y} x1={1820} x2={1829} y1={y + 0.5} y2={y + 0.5} stroke="#fff" />)}
    {["0.0300", "0.0200", "0.0100", "-0.0000", "-0.0100", "-0.0200", "-0.0300"].map((t, i) => (
      <AxisText key={t} x={1881} y={oscDense[i] + 1}>{t}</AxisText>
    ))}
    <rect x={1820} y={666} width={68} height={16} fill="#0000ff" />
    <AxisTag x={1854} y={674}>0.0347</AxisTag>
    <rect x={1888} y={665} width={1} height={362} fill="#f0f0f0" />
    <rect x={1820} y={1025.5} width={68} height={1.5} fill="#c8c8c8" />
  </Canvas>
);

const TabShape: React.FC<{ on?: boolean }> = ({ on }) => (
  <svg viewBox="0 0 100 20" preserveAspectRatio="none">
    <polygon points="0,0 8,19 92,19 100,0" fill={on ? "#fff" : "#f0f0f0"} stroke="#111" strokeWidth="1" vectorEffect="non-scaling-stroke" />
    <line x1="0" y1="0" x2="100" y2="0" stroke={on ? "#fff" : "#111"} strokeWidth="1" vectorEffect="non-scaling-stroke" />
  </svg>
);

export default function App() {
  return (
    <Page>
      <Global />
      <TitleBar>
        <TitleBlur />
        <svg width="20" height="18" viewBox="0 0 20 18">
          <rect x="0" y="5" width="18" height="11" fill="#1830c0" />
          <path d="M0 15l5-6 3 3 5-7 5-2" fill="none" stroke="#e02020" strokeWidth="1.6" />
          <path d="M0 10l6-3 3 3 6-5" fill="none" stroke="#80a0ff" />
        </svg>
        <TitleText>Advanced GET for TS2000i - [EUROFX - EURO FUTURES, 240]</TitleText>
        <WinButtons>
          <WinButton $w={37}>
            <svg width="18" height="14" viewBox="0 0 18 14"><rect x="1" y="9" width="16" height="4" fill="#e8eef4" stroke="#33506c" strokeWidth=".6" /></svg>
          </WinButton>
          <WinButton $w={36}>
            <svg width="20" height="18" viewBox="0 0 20 18"><rect x="6" y="1" width="13" height="11" fill="none" stroke="#eef" strokeWidth="1.6" /><rect x="2" y="5.5" width="12" height="11" fill="#3a688f" stroke="#eef" strokeWidth="2" /></svg>
          </WinButton>
          <WinButton $w={62} $red>
            <svg width="22" height="20" viewBox="0 0 22 20"><path d="M3 2l16 16M19 2L3 18" stroke="#f4f4f4" strokeWidth="4" /></svg>
          </WinButton>
        </WinButtons>
      </TitleBar>

      <MenuBar>
        <svg width="14" height="20" viewBox="0 0 14 20"><path d="M5 1h3v5h5v3H8v10H5v-7H1V9h4z" fill="#fff" stroke="#222" strokeWidth="1.2" /></svg>
        <MenuItems>
          <span><u>F</u>ile</span>
          <span><u>P</u>age</span>
          <span><u>C</u>hart</span>
          <span><u>T</u>ools</span>
          <span><u>V</u>iew</span>
          <span><u>W</u>indow</span>
          <span><u>H</u>elp</span>
        </MenuItems>
        <MdiButtons>
          <MdiButton><svg width="10" height="10" viewBox="0 0 10 10"><path d="M1 8h7" stroke="#556" strokeWidth="2" /></svg></MdiButton>
          <MdiButton><svg width="10" height="10" viewBox="0 0 10 10"><rect x="3.5" y=".5" width="6" height="6" fill="none" stroke="#556" /><rect x=".5" y="3.5" width="6" height="6" fill="#e0e4f0" stroke="#556" /></svg></MdiButton>
          <MdiButton><svg width="10" height="10" viewBox="0 0 10 10"><path d="M1 1l8 8M9 1L1 9" stroke="#556" strokeWidth="1.6" /></svg></MdiButton>
        </MdiButtons>
      </MenuBar>

      <ToolBar>
        <ToolGroup>{topIcons.map((n, i) => <TopButton key={i} $w={23}>{n}</TopButton>)}</ToolGroup>
        <ToolGroup $ml={7}>{fileIcons.map((n, i) => <TopButton key={i} $w={23}>{n}</TopButton>)}</ToolGroup>
        <ToolGroup $ml={7}>{helpIcons.map((n, i) => <TopButton key={i} $w={23}>{n}</TopButton>)}</ToolGroup>
        <ToolSep $l={7} $r={6} />
        <ToolGroup>
          {ind1.map((b, i) => <TopButton key={i} $w={31} $on={b.on}><ToolLabel>{b.t}</ToolLabel></TopButton>)}
          <TopButton $w={31}>
            <ToolLabel $color="#0000e0">X</ToolLabel><ToolLabel>T</ToolLabel><ToolLabel $color="#e00000">L</ToolLabel>
          </TopButton>
        </ToolGroup>
        <ToolSep $l={6} $r={6} />
        <ToolGroup>{ind2.map((t) => <TopButton key={t} $w={31}><ToolLabel>{t}</ToolLabel></TopButton>)}</ToolGroup>
        <ToolSep $l={7} $r={6} />
        <ToolGroup>{periods.map((t) => <TopButton key={t} $w={23}><NumLabel>{t}</NumLabel></TopButton>)}</ToolGroup>
        <ToolSep $l={5} $r={0} />
      </ToolBar>

      <Body>
        <LeftTools $w={38} $pt={11} $pl={3}>
          {leftIcons.map((b, i) => <SideButton key={i} $w={30} $on={b.on} $mt={i === 0 ? 0 : 0.95}>{b.n}</SideButton>)}
          <SideButton $w={30} $mt={6}>
            <Ico w={24}><rect x="5" y="5" width="13" height="11" fill="#fff" stroke="#000" /><path d="M7 8h9M7 10.5h9M7 13h9" stroke="#444" /><path d="M12 7l8-5 2 2-7 5z" fill="#203080" /></Ico>
          </SideButton>
        </LeftTools>

        <Center>
          <Header>
            <span>02/10/23</span>
            <HeaderStat $ml={653}>O: 1.0761</HeaderStat>
            <HeaderStat $ml={44}>1.0771</HeaderStat>
            <HeaderStat $ml={17} $c="#ff0000">L:</HeaderStat>
            <HeaderStat $ml={9}>1.0749</HeaderStat>
            <HeaderStat $ml={26}>C: 1.0750</HeaderStat>
            <HeaderEnd>-0.0000</HeaderEnd>
          </Header>
          <HeadRule />
          <ChartRow $h={545}>
            <PriceChart />
            <PriceAxis />
          </ChartRow>
          <Splitter />
          <ChartRow $h={362}>
            <ChartColumn>
              <OscChart />
              <Tabs>
                <NavButton><svg width="8" height="10" viewBox="0 0 8 10"><path d="M6 0v10L1 5z" /></svg></NavButton>
                <NavButton><svg width="8" height="10" viewBox="0 0 8 10"><path d="M2 0v10l5-5z" /></svg></NavButton>
                <Tab $w={74}><TabShape /><span>Elliott Trigger</span></Tab>
                <Tab $w={50}><TabShape /><span>Osc 5,35</span></Tab>
                <Tab $w={68}><TabShape on /><span>Osc 16,64</span></Tab>
              </Tabs>
            </ChartColumn>
            <OscAxis />
          </ChartRow>
          <DateRow>
            <DateBar>
              <DateGap $w={67} />
              {dateCells.map(([t, w]) => <DateCell key={t} $w={w}>{t}</DateCell>)}
              <DateMark>09/19/22 - 17:00</DateMark>
            </DateBar>
            <BlueBlock />
          </DateRow>
        </Center>

        <SideTools $w={31} $pt={0} $pl={5}>
          {rightIcons.map((n, i) => <SideButton key={i} $w={22} $mt={rightTops[i]}>{n}</SideButton>)}
          <SideButton $w={22} $mt={5}>
            <svg width="16" height="16" viewBox="0 0 16 16"><path d="M3 1v9a5 5 0 0 0 10 0V1h-3v9a2 2 0 0 1-4 0V1z" fill="#e00000" /></svg>
          </SideButton>
        </SideTools>
      </Body>

      <StatusBar>
        <PageBox>Page: 4 - EURO B</PageBox>
      </StatusBar>
      <BottomEdge />
    </Page>
  );
}
